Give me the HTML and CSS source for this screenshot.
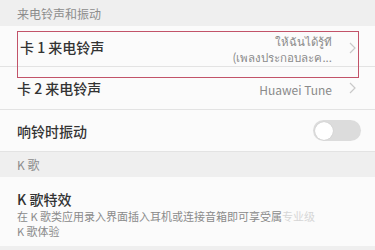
FILE: index.html
```html
<!DOCTYPE html>
<html lang="zh-CN">
<head>
<meta charset="utf-8">
<link rel="stylesheet" href="styles.css">
</head>
<body>
<div class="screen">
  <div class="section-header first">来电铃声和振动</div>
  <div class="row row-1">
    <span class="title">卡 1 来电铃声</span>
    <span class="value two-line">
      <span>ให้ฉันได้รู้ที</span>
      <span>(เพลงประกอบละค...</span>
    </span>
    <svg class="chevron" width="7" height="12" viewBox="0 0 7 12"><polyline points="1,1 6,6 1,11" fill="none" stroke="#c9c9c9" stroke-width="1.2"/></svg>
    <div class="highlight"></div>
  </div>
  <div class="row row-2">
    <span class="title">卡 2 来电铃声</span>
    <span class="value">Huawei Tune</span>
    <svg class="chevron" width="7" height="12" viewBox="0 0 7 12"><polyline points="1,1 6,6 1,11" fill="none" stroke="#c9c9c9" stroke-width="1.2"/></svg>
  </div>
  <div class="row row-3">
    <span class="title">响铃时振动</span>
    <span class="toggle"><span class="knob"></span></span>
  </div>
  <div class="section-header second">K 歌</div>
  <div class="item">
    <div class="title">K 歌特效</div>
    <div class="desc"><span>在 K 歌类应用录入界面插入耳机或连接音箱即可享受属</span><span class="fade">专业级</span></div>
    <div class="desc">K 歌体验</div>
  </div>
  <div class="bottom-band"></div>
</div>
</body>
</html>
```

FILE: styles.css
```css
html, body {
  margin: 0;
  padding: 0;
  background: #fafafa;
}
.screen {
  width: 375px;
  height: 250px;
  overflow: hidden;
  font-family: "Noto Sans CJK SC", "Noto Sans", "DejaVu Sans", sans-serif;
  display: flex;
  flex-direction: column;
}
.section-header {
  background: #efefef;
  color: #8c8c8c;
  font-size: 12px;
  padding-left: 17px;
  display: flex;
  align-items: center;
  flex: none;
}
.section-header.first { height: 26px; }
.section-header.second { height: 25px; }
.row {
  display: flex;
  align-items: center;
  padding: 0 16px 0 17px;
  border-bottom: 1px solid #e3e3e3;
  box-sizing: border-box;
  flex: none;
  background: #fbfbfb;
}
.row-1 { height: 41px; position: relative; }
.row-2 { height: 43px; }
.row-3 { height: 42px; }
.title {
  font-size: 14px;
  color: #333;
  font-weight: 500;
  flex: 1;
}
.row-1 .title { padding-left: 3px; padding-top: 2px; }
.value {
  font-size: 12px;
  color: #8a8a8a;
  text-align: right;
  margin-right: 17px;
}
.row-2 .value { padding-top: 3px; }
.two-line {
  display: flex;
  flex-direction: column;
  line-height: 16px;
  padding-top: 5px;
  font-size: 11.5px;
}
.chevron { flex: none; margin-right: 3px; }
.row-1 .chevron { margin-top: 3px; }
.highlight {
  position: absolute;
  left: 17px;
  right: 16px;
  top: 5px;
  height: 47px;
  border: 1.5px solid #c25369;
  box-sizing: border-box;
  pointer-events: none;
}
.toggle {
  width: 48px;
  height: 21px;
  border-radius: 11px;
  background: #dcdcdc;
  display: flex;
  align-items: center;
  padding: 0 2px;
  box-sizing: border-box;
  margin-right: -2px;
}
.knob {
  width: 18px;
  height: 18px;
  border-radius: 50%;
  background: #fff;
  box-shadow: 0 0 1px rgba(0,0,0,0.2);
}
.item {
  flex: none;
  height: 69px;
  padding: 12px 17px 0;
  box-sizing: border-box;
  background: #fbfbfb;
}
.item .title {
  font-size: 14px;
  line-height: 20px;
}
.desc {
  font-size: 11px;
  color: #8a8a8a;
  line-height: 15px;
  white-space: nowrap;
}
.desc .fade { color: #d6d6d6; }
.bottom-band {
  flex: 1;
  background: #efefef;
}
```
